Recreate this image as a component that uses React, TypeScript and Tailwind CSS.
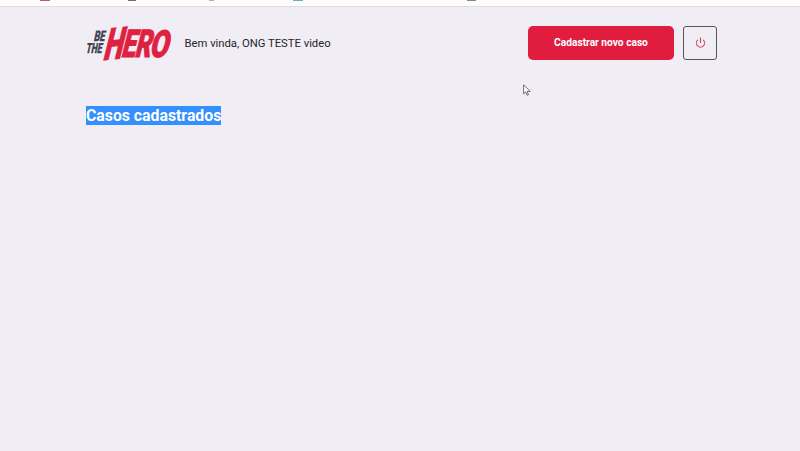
import React from "react";

const tabs = [
  { left: "ml-[40px]", color: "bg-[#c9546b]", width: "w-[10px]" },
  { left: "ml-[78px]", color: "bg-[#6e6e75]", width: "w-[8px]" },
  { left: "ml-[73px]", color: "bg-[#dd9aa8]", width: "w-[5px]" },
  { left: "ml-[79px]", color: "bg-[#5cb5cc]", width: "w-[10px]" },
  { left: "ml-[164px]", color: "bg-[#818a94]", width: "w-[9px]" },
];

const heroLetters = [
  { char: "H", x: 16.2, y: 36.2, size: 43.5, width: 19, slope: -6 },
  { char: "E", x: 34.6, y: 33, size: 38.5, width: 14, slope: 0 },
  { char: "R", x: 48, y: 33, size: 38.5, width: 16, slope: 0 },
  { char: "O", x: 62.8, y: 32.6, size: 37.5, width: 18.6, slope: 0 },
];

function Logo() {
  return (
    <svg
      width="86"
      height="38"
      viewBox="0 0 86 38"
      className="shrink-0 overflow-visible font-['Roboto',sans-serif] font-black"
      aria-label="Be The Hero"
    >
      <g fill="#41414d" stroke="#41414d" strokeWidth="0.3">
        <text transform="translate(7.4 17.2) skewX(-12)" fontSize="14.5" textLength="11" lengthAdjust="spacingAndGlyphs">BE</text>
        <text transform="translate(-0.6 29.4) skewX(-12)" fontSize="14" textLength="16" lengthAdjust="spacingAndGlyphs">THE</text>
      </g>
      <g fill="#e02041" stroke="#e02041" strokeWidth="1">
        {heroLetters.map((l) => (
          <text
            key={l.char}
            transform={`translate(${l.x} ${l.y}) skewY(${l.slope}) skewX(-14)`}
            fontSize={l.size}
            textLength={l.width}
            lengthAdjust="spacingAndGlyphs"
          >
            {l.char}
          </text>
        ))}
      </g>
    </svg>
  );
}

export default function App() {
  return (
    <div className="relative h-[451px] w-[800px] overflow-hidden bg-[#f0edf5] font-['Roboto',sans-serif]">
      <div className="flex h-[7px] items-start border-b border-[#dddce0] bg-[#fefcfd]">
        {tabs.map((t) => (
          <span key={t.color} className={`h-px ${t.left} ${t.width} ${t.color}`} />
        ))}
      </div>
      <main className="ml-[86px] w-[631px] pt-[18px]">
        <header className="flex h-[36px] items-center">
          <Logo />
          <span className="ml-[12.5px] pt-px text-[11.25px] leading-4 whitespace-nowrap text-[#25252b]">
            Bem vinda, ONG TESTE video
          </span>
          <button className="ml-auto h-[34px] w-[146px] rounded-[5px] bg-[#e01d3f] text-[10.2px] font-bold text-white">
            Cadastrar novo caso
          </button>
          <button className="ml-[9px] flex size-[34px] items-center justify-center rounded-[3px] border border-[#55555b] pb-[2px]" aria-label="Sair">
            <svg width="11" height="11" viewBox="0 0 24 24" fill="none" stroke="#d5445e" strokeWidth="2.4" strokeLinecap="round" strokeLinejoin="round">
              <path d="M18.36 6.64a9 9 0 1 1-12.73 0" />
              <path d="M12 2v10" />
            </svg>
          </button>
        </header>
        <h1 className="mt-[45px] w-fit bg-[#3390fc] text-[15.8px] leading-[19px] font-bold whitespace-nowrap text-white">
          Casos cadastrados
        </h1>
      </main>
      <svg className="absolute top-[84px] left-[523px]" width="8" height="12" viewBox="0 0 8 12">
        <path d="M.6.8v9l2.1-1.9 1.4 3.4 1.4-.6L4.1 7.4h3.1z" fill="#fff" stroke="#4a4a50" strokeWidth=".8" />
      </svg>
    </div>
  );
}
